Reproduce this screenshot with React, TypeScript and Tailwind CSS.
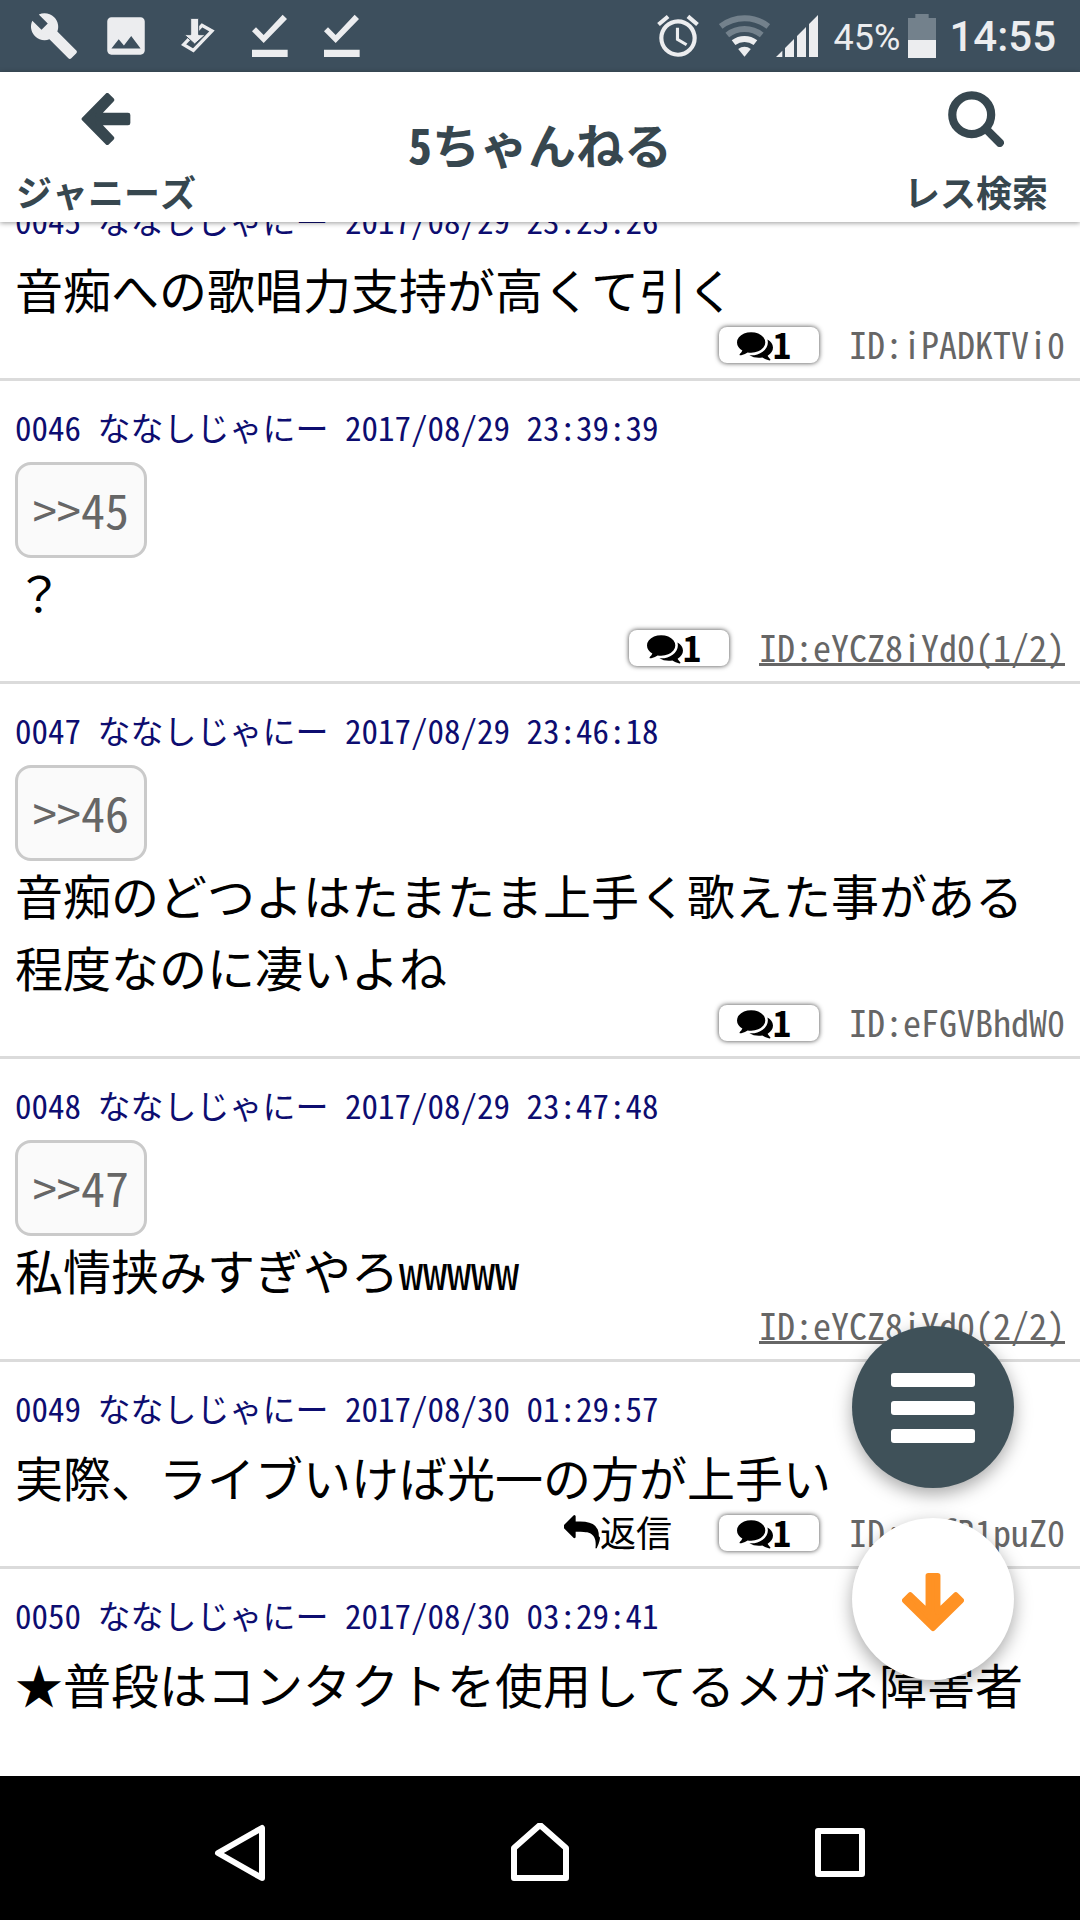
import React from 'react';
import { MdAlarm, MdBuild, MdImage } from 'react-icons/md';

type Post = {
  no: string;
  date: string;
  anchor?: string;
  body: string;
  reply?: boolean;
  comments?: number;
  id?: string;
  idLinked?: boolean;
};

const posts: Post[] = [
  { no: '0045', date: '2017/08/29 23:25:26', body: '音痴への歌唱力支持が高くて引く', comments: 1, id: 'iPADKTVi0' },
  { no: '0046', date: '2017/08/29 23:39:39', anchor: '>>45', body: '？', comments: 1, id: 'eYCZ8iYd0(1/2)', idLinked: true },
  {
    no: '0047',
    date: '2017/08/29 23:46:18',
    anchor: '>>46',
    body: '音痴のどつよはたまたま上手く歌えた事がある程度なのに凄いよね',
    comments: 1,
    id: 'eFGVBhdW0',
  },
  { no: '0048', date: '2017/08/29 23:47:48', anchor: '>>47', body: '私情挟みすぎやろwwwww', id: 'eYCZ8iYd0(2/2)', idLinked: true },
  { no: '0049', date: '2017/08/30 01:29:57', body: '実際、ライブいけば光一の方が上手い', reply: true, comments: 1, id: 'mafB1puZ0' },
  { no: '0050', date: '2017/08/30 03:29:41', body: '★普段はコンタクトを使用してるメガネ障害者' },
];

const DownloadIcon = () => (
  <svg viewBox="519 33 150 150" className="size-[50px]" fill="currentColor">
    <path d="M551 134 L606 76 L636 93 L580 151 Z" fill="none" stroke="currentColor" strokeWidth="10" />
    <path d="M572 55 H596 V104 H616 L584 132 L553 104 H572 Z" stroke="#3d4f5d" strokeWidth="3" />
  </svg>
);

const DoneIcon = () => (
  <svg viewBox="738 33 150 150" className="size-[50px]" fill="currentColor">
    <path d="M759 94 L771 82 L794 105 L851 44 L864 57 L794 129 Z" />
    <path d="M759 149 H866 V171 H759 Z" />
  </svg>
);

const WifiIcon = () => (
  <svg viewBox="236 48 154 126" className="h-[42px] w-[51px]" fill="none" stroke="currentColor" strokeWidth="18">
    <g className="text-[#73818c]">
      <path d="M241 82 A117 117 0 0 1 385 82" />
      <path d="M261 108 A84 84 0 0 1 365 108" />
    </g>
    <path d="M280 131 A54 54 0 0 1 346 131" />
    <path d="M313 174 L294 150 A31 31 0 0 1 332 150 Z" fill="currentColor" stroke="none" />
  </svg>
);

const SignalIcon = () => (
  <svg viewBox="408 48 126 126" className="size-[42px]" fill="currentColor">
    <path d="M408 174 L427 155 V174 Z M435 174 V147 L462 120 V174 Z M471 174 V111 L498 84 V174 Z M507 174 V75 L534 48 V174 Z" />
  </svg>
);

const BatteryIcon = () => (
  <svg viewBox="804 39 84 132" className="h-11 w-7" fill="currentColor">
    <path d="M826 39 H866 V51 H888 V117 H804 V51 H826 Z" className="text-[#73818c]" />
    <path d="M804 117 H888 V171 H804 Z" />
  </svg>
);

const ArrowIcon = ({ className }: { className: string }) => (
  <svg viewBox="239 277 158 158" className={className} fill="currentColor" stroke="currentColor" strokeWidth="14" strokeLinejoin="round">
    <path d="M251 356 L322 284 L336 298 L292 344 H385 V368 H292 L336 414 L322 428 Z" />
  </svg>
);

const SearchIcon = () => (
  <svg viewBox="920 271 170 170" className="size-14" fill="none" stroke="currentColor" strokeWidth="25">
    <circle cx="992" cy="343" r="59" />
    <path d="M1035 386 L1077 428" strokeLinecap="round" />
  </svg>
);

const CommentsIcon = () => (
  <svg viewBox="0 0 1792 1792" className="size-9" fill="currentColor">
    <path d="M1408 768q0 139-94 257t-256.5 186.5-353.5 68.5q-86 0-176-16-124 88-278 128-36 9-86 16h-3q-11 0-20.5-8t-11.5-21q-1-3-1-6.5t.5-6.5 2-6l2.5-5 3.5-5.5 4-5 4.5-5 4-4.5q5-6 23-25t26-29.5 22.5-29 25-38.5 20.5-44q-124-72-195-177t-71-224q0-139 94-257t256.5-186.5 353.5-68.5 353.5 68.5 256.5 186.5 94 257zm384 256q0 120-71 224.5t-195 176.5q10 24 20.5 44t25 38.5 22.5 29 26 29.5 23 25q1 1 4 4.5t4.5 5 4 5 3.5 5.5l2.5 5 2 6 .5 6.5-1 6.5q-3 14-13 22t-22 7q-50-7-86-16-154-40-278-128-90 16-176 16-271 0-472-132 58 4 88 4 161 0 309-45t264-129q125-92 192-212t67-254q0-77-23-152 129 71 204 178t75 230z" />
  </svg>
);

const ReplyIcon = () => (
  <svg viewBox="0 0 1792 1792" className="size-9" fill="currentColor">
    <path d="M1792 1120q0 166-127 451-3 7-10.5 24t-13.5 30-13 22q-12 17-28 17-15 0-23.5-10t-8.5-25q0-9 2.5-26.5t2.5-23.5q5-68 5-123 0-112-19.5-200.5t-54-153.5-89-112-117-78.5-144.5-47-165-23.5-184.5-7h-224v256q0 26-19 45t-45 19-45-19l-512-512q-19-19-19-45t19-45l512-512q19-19 45-19t45 19 19 45v256h224q713 0 875 403 53 134 53 333z" />
  </svg>
);

const StatusBar = () => (
  <div className="flex h-[72px] shrink-0 items-center justify-between bg-[#3d4f5d] pr-6 pl-[29px] font-['Roboto',sans-serif] text-[#ecedef]">
    <div className="flex items-center gap-[22px]">
      <MdBuild size={50} />
      <MdImage size={50} />
      <DownloadIcon />
      <DoneIcon />
      <DoneIcon />
    </div>
    <div className="flex items-center">
      <MdAlarm size={50} className="mr-4" />
      <WifiIcon />
      <div className="mr-4 ml-1.5">
        <SignalIcon />
      </div>
      <span className="mt-1 mr-2 text-4xl">45%</span>
      <BatteryIcon />
      <span className="ml-[13px] text-[42px] font-medium">14:55</span>
    </div>
  </div>
);

const Header = () => (
  <header className="relative z-10 grid shrink-0 grid-cols-[1fr_auto_1fr] items-start bg-white px-4 pt-[19px] pb-[9px] font-bold text-[#37474f] shadow-[0_1px_5px_rgba(0,0,0,0.4)]">
    <button type="button" className="flex flex-col items-center gap-[22px] justify-self-start">
      <span className="flex h-14 items-center">
        <ArrowIcon className="size-[52px]" />
      </span>
      <span className="text-4xl leading-[44px]">ジャニーズ</span>
    </button>
    <h1 className="mt-4 text-5xl leading-[72px]">5ちゃんねる</h1>
    <button type="button" className="mr-4 flex flex-col items-center gap-[22px] justify-self-end">
      <SearchIcon />
      <span className="text-4xl leading-[44px]">レス検索</span>
    </button>
  </header>
);

const PostItem = ({ post }: { post: Post }) => (
  <article className="border-b-[3px] border-[#dbdbdb] px-[15px] pt-5 last:border-b-0">
    <h2 className="text-[33px] leading-[52px] text-[#0d0d70]">
      {post.no} ななしじゃにー {post.date}
    </h2>
    {post.anchor && (
      <a href="#anchor" className="mt-[9px] -mb-[9px] flex h-24 w-fit items-center rounded-2xl border-[3px] border-[#cacaca] bg-[#fafafa] px-[15px] pb-1 text-5xl leading-[72px] text-[#666]">
        {post.anchor}
      </a>
    )}
    <p className="mt-1.5 text-5xl leading-[72px] text-black">{post.body}</p>
    <div className="flex h-[54px] items-start justify-end pt-[3px] text-4xl leading-8">
      {post.reply && (
        <button type="button" className="mr-[47px] flex items-start">
          <ReplyIcon />
          返信
        </button>
      )}
      {post.comments && (
        <button type="button" className="mr-[30px] flex h-9 items-start rounded-lg bg-white pr-7 pl-[18px] font-bold shadow-[0_0_5px_rgba(0,0,0,0.75)]">
          <CommentsIcon />
          {post.comments}
        </button>
      )}
      {post.id &&
        (post.idLinked ? (
          <a href="#id" className="border-b-[3px] border-[#666] pb-px text-[#666]">
            ID:{post.id}
          </a>
        ) : (
          <span className="text-[#666]">ID:{post.id}</span>
        ))}
    </div>
  </article>
);

const NavBar = () => (
  <nav className="flex h-36 shrink-0 items-center justify-around bg-black px-[90px] pt-2.5 text-white">
    <button type="button" aria-label="戻る">
      <svg viewBox="0 0 60 60" className="size-[60px]" fill="none" stroke="currentColor" strokeWidth="6" strokeLinejoin="round">
        <path d="M8 30 L52 5 V55 Z" />
      </svg>
    </button>
    <button type="button" aria-label="ホーム">
      <svg viewBox="0 0 60 60" className="size-[60px]" fill="none" stroke="currentColor" strokeWidth="6" strokeLinejoin="round">
        <path d="M4 55 V25 L30 2 L56 25 V55 Z" />
      </svg>
    </button>
    <button type="button" aria-label="履歴">
      <svg viewBox="0 0 60 60" className="size-[60px]" fill="none" stroke="currentColor" strokeWidth="6" strokeLinejoin="round">
        <path d="M8 8 H52 V51 H8 Z" />
      </svg>
    </button>
  </nav>
);

const App: React.FC = () => {
  return (
    <div className="flex h-screen flex-col bg-white font-['Noto_Sans_Mono_CJK_JP','Noto_Sans_CJK_JP',sans-serif]">
      <StatusBar />
      <Header />
      <main className="relative flex-1 overflow-hidden">
        {/* list is scrolled a little, so the first post runs under the header */}
        <div className="-mt-12">
          {posts.map((post) => (
            <PostItem key={post.no} post={post} />
          ))}
        </div>

        {/* Floating buttons */}
        <div className="absolute right-[66px] bottom-24 flex flex-col gap-[30px]">
          <button
            type="button"
            aria-label="メニュー"
            className="flex size-[162px] items-center justify-center rounded-full bg-[#3f5159] pt-0.5 text-white shadow-[0_6px_18px_rgba(0,0,0,0.35)]"
          >
            <svg viewBox="0 0 84 70" className="h-[70px] w-[84px]" fill="currentColor">
              <rect width="84" height="14" rx="3" />
              <rect y="28" width="84" height="14" rx="3" />
              <rect y="56" width="84" height="14" rx="3" />
            </svg>
          </button>
          <button
            type="button"
            aria-label="下へ"
            className="flex size-[162px] items-center justify-center rounded-full bg-white pt-1.5 text-[#ff9224] shadow-[0_6px_18px_rgba(0,0,0,0.35)]"
          >
            <ArrowIcon className="size-[62px] -rotate-90" />
          </button>
        </div>
      </main>
      <NavBar />
    </div>
  );
};

export default App;
